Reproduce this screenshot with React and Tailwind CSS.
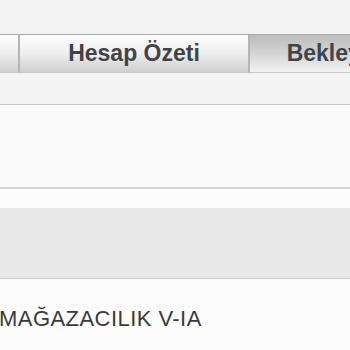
import React from 'react';

const tabs = [
  { label: 'Özet', width: 'w-[20px]', active: false },
  { label: 'Hesap Özeti', width: 'w-[230px]', active: false },
  { label: 'Bekleyen İşler', width: 'w-[230px]', active: true }
];

const App = () => {
  return (
    <div
      className="w-[350px] h-[350px] overflow-hidden bg-[#f3f3f3]"
      style={{ fontFamily: '"Liberation Sans", Arial, sans-serif' }}
    >
      {/* top spacer */}
      <div className="h-[34px] bg-[#f3f3f3]" />

      {/* tab strip */}
      <div className="flex h-[39px] border-t border-[#a9a9a9] overflow-hidden">
        {tabs.map((tab, i) => (
          <div
            key={i}
            className={`${tab.width} shrink-0 flex items-center justify-center border-r-2 border-[#b5b5b5] border-b border-b-[#c9c9c9] ${
              tab.active
                ? 'bg-gradient-to-b from-[#bdbdbd] via-[#d4d4d4] to-[#f2f2f2]'
                : 'bg-gradient-to-b from-[#fdfdfd] via-[#eeeeee] to-[#cfcfcf]'
            }`}
          >
            {i > 0 && (
              <span className="text-[23px] font-bold text-[#3f4448] whitespace-nowrap leading-none">
                {tab.label}
              </span>
            )}
          </div>
        ))}
      </div>

      <div className="h-[32px] bg-[#f4f4f4] border-b border-[#c8c8c8]" />

      <div className="h-[84px] bg-[#fafafa] border-b-2 border-[#d3d3d3]" />

      <div className="h-[19px] bg-[#fbfbfb]" />

      <div className="h-[71px] bg-[#e8e8e8] border-b border-[#cdcdcd]" />

      <div className="h-[80px] bg-[#fcfcfc] pt-[29px]">
        <p className="ml-[-1px] text-[22px] text-[#3a3a3a] leading-none tracking-[0.45px] whitespace-nowrap">
          MAĞAZACILIK V-IA
        </p>
      </div>
    </div>
  );
};

export default App;
